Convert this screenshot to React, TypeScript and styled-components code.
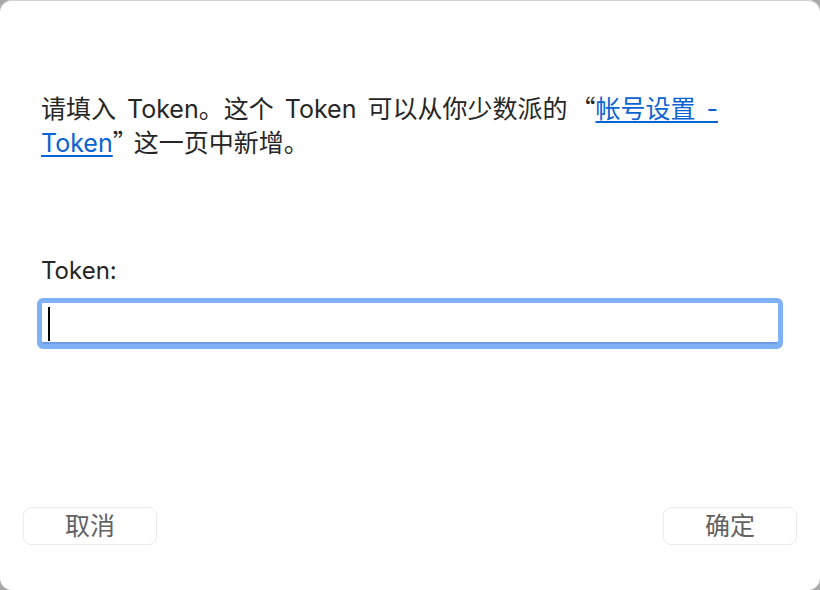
import React from "react";
import styled, { createGlobalStyle } from "styled-components";

const Global = createGlobalStyle`
  html, body { margin: 0; padding: 0; background: #a9a9a9; }
  body { font-family: Inter, "Noto Sans CJK SC", sans-serif; }
  * { box-sizing: border-box; }
`;

const Window = styled.div`
  width: 820px;
  height: 590px;
  background: #ffffff;
  border-radius: 12px;
  box-shadow: inset 0 1px 0 #d4d4d4;
  display: flex;
  flex-direction: column;
  overflow: hidden;
`;

const Body = styled.div`
  flex: 1;
  display: flex;
  flex-direction: column;
  padding: 92px 38px 0 41px;
`;

const Message = styled.p`
  margin: 0;
  font-size: 25px;
  line-height: 34px;
  color: #262626;
  word-spacing: 4px;
`;

const Quote = styled.span<{ $open?: boolean }>`
  font-family: "Noto Sans CJK SC", sans-serif;
  line-height: 1;
  margin-left: ${(p) => (p.$open ? "3px" : "0")};
  margin-right: ${(p) => (p.$open ? "0" : "-4px")};
`;

const Link = styled.a`
  color: #0a63d2;
  text-decoration: underline;
  text-underline-offset: 3px;
  text-decoration-thickness: 1.5px;
`;

const Label = styled.div`
  margin-top: 94px;
  font-size: 24px;
  line-height: 34px;
  color: #262626;
`;

const Field = styled.div`
  margin-top: 10px;
  margin-left: -4px;
  width: 746px;
  height: 51px;
  border: 5px solid #80b1f6;
  border-radius: 6px;
  background: #ffffff;
  box-shadow: inset 0 -2px 0 #6c9de6;
  display: flex;
  align-items: center;
  padding-left: 6px;
`;

const Caret = styled.span`
  display: block;
  width: 2px;
  height: 34px;
  background: #000000;
`;

const Footer = styled.div`
  display: flex;
  justify-content: space-between;
  padding: 0 23px 45px 23px;
`;

const Button = styled.button`
  width: 134px;
  height: 38px;
  border: 1px solid #ebebeb;
  border-radius: 8px;
  background: #ffffff;
  font-family: Inter, "Noto Sans CJK SC", sans-serif;
  font-size: 25px;
  line-height: 36px;
  color: #626262;
  padding: 0;
  cursor: pointer;
`;

export default function App() {
  return (
    <>
      <Global />
      <Window>
        <Body>
          <Message>
            请填入 Token。这个 Token 可以从你少数派的<Quote $open>“</Quote>
            <Link href="#">帐号设置 - Token</Link>
            <Quote>”</Quote>这一页中新增。
          </Message>
          <Label>Token:</Label>
          <Field role="textbox" aria-label="Token">
            <Caret />
          </Field>
        </Body>
        <Footer>
          <Button>取消</Button>
          <Button>确定</Button>
        </Footer>
      </Window>
    </>
  );
}
